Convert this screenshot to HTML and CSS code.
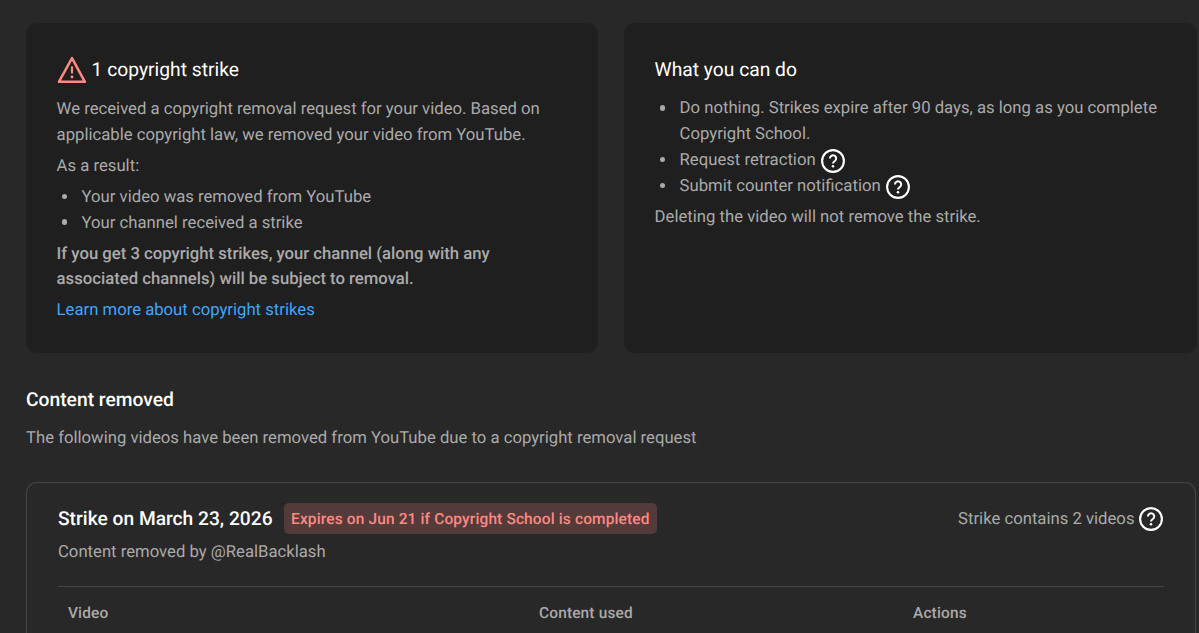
FILE: index.html
```html
<!DOCTYPE html>
<html lang="en">
<head>
<meta charset="utf-8">
<title>Copyright strikes</title>
<link rel="stylesheet" href="styles.css">
</head>
<body>
<svg class="defs" width="0" height="0" aria-hidden="true">
  <symbol id="help" viewBox="0 0 24 24">
    <circle cx="12" cy="12" r="10.9" fill="none" stroke="#fff" stroke-width="2.1"/>
    <path d="M8.9 9.5a3.15 3.15 0 1 1 5 2.5c-1.1.8-1.9 1.2-1.9 2.5" fill="none" stroke="#fff" stroke-width="2"/>
    <circle cx="12" cy="17.2" r="1.3" fill="#fff"/>
  </symbol>
</svg>
<main class="page">
  <div class="cards">
    <section class="card">
      <h2 class="card-title">
        <svg class="warning" viewBox="0 0 30 30"><path d="M15 3.1 27.9 26.8H1.9Z" fill="none" stroke="#ff8983" stroke-width="2.5" stroke-linejoin="round"/><path d="M15 11.4v7" stroke="#ff8983" stroke-width="2.2"/><circle cx="15" cy="22" r="1.4" fill="#ff8983"/></svg>
        <span>1 copyright strike</span>
      </h2>
      <p>We received a copyright removal request for your video. Based on<br>applicable copyright law, we removed your video from YouTube.</p>
      <p>As a result:</p>
      <ul>
        <li>Your video was removed from YouTube</li>
        <li>Your channel received a strike</li>
      </ul>
      <p class="strong">If you get 3 copyright strikes, your channel (along with any<br>associated channels) will be subject to removal.</p>
      <p><a class="link">Learn more about copyright strikes</a></p>
    </section>
    <section class="card options">
      <h2 class="card-title"><span>What you can do</span></h2>
      <ul>
        <li>Do nothing. Strikes expire after 90 days, as long as you complete<br>Copyright School.</li>
        <li>Request retraction<svg class="help"><use href="#help"/></svg></li>
        <li>Submit counter notification<svg class="help"><use href="#help"/></svg></li>
      </ul>
      <p>Deleting the video will not remove the strike.</p>
    </section>
  </div>
  <h2 class="section-title">Content removed</h2>
  <p class="section-sub">The following videos have been removed from YouTube due to a copyright removal request</p>
  <section class="strike">
    <div class="strike-head">
      <h3 class="strike-title">Strike on March 23, 2026</h3>
      <span class="badge">Expires on Jun 21 if Copyright School is completed</span>
      <span class="count">Strike contains 2 videos</span>
      <svg class="help"><use href="#help"/></svg>
    </div>
    <p class="strike-by">Content removed by @RealBacklash</p>
    <div class="columns">
      <span>Video</span><span>Content used</span><span>Actions</span>
    </div>
  </section>
</main>
</body>
</html>
```
FILE: styles.css
```css
* { box-sizing: border-box; }
html, body { height: 100%; }
body {
  margin: 0;
  overflow: hidden;
  background: #282828;
  color: #aaa;
  font: 400 16.69px/25.8px Roboto, sans-serif;
  text-rendering: geometricPrecision;
}
h2, h3, p, ul { margin: 0; padding: 0; font-weight: 400; }
.defs { display: block; height: 0; }
.page {
  display: flex;
  flex-direction: column;
  height: 100%;
  padding: 23px 3px 0 26px;
}
.cards { display: grid; grid-template-columns: 572px 573px; gap: 26px; }
.card {
  height: 330px;
  padding: 31px 31px 31px 30.6px;
  border-radius: 11px;
  background: #1f1f1f;
  white-space: nowrap;
}
.card-title {
  display: flex;
  align-items: center;
  height: 31px;
  margin-bottom: 12.1px;
  color: #fff;
  font-size: 19.25px;
}
.warning { width: 30px; height: 30px; margin-right: 5px; }
.card p, .card ul { margin-bottom: 5.2px; }
.card ul { padding-left: 25px; list-style: none; }
.card li::before {
  content: "";
  display: inline-block;
  width: 5.6px;
  height: 5.6px;
  margin: 0 14.2px 0 -19.8px;
  border-radius: 50%;
  background: currentColor;
  vertical-align: 2.6px;
}
.options .card-title { margin-bottom: 11.3px; }
.help { width: 24px; height: 24px; flex: none; overflow: visible; }
li .help { margin: -8px 0 -8px 5px; vertical-align: 0; }
.strong { font-weight: 500; }
.link { color: #3ea6ff; }
.section-title {
  margin-top: 34px;
  color: #fff;
  font-size: 19.25px;
  font-weight: 500;
  line-height: 26px;
}
.section-sub { margin-top: 13px; }
.strike {
  flex: 1;
  margin-top: 30px;
  padding: 20px 31px 0;
  border: 1px solid #444;
  border-bottom: 0;
  border-radius: 11px 11px 0 0;
  white-space: nowrap;
}
.strike-head { display: flex; align-items: center; height: 31px; }
.strike-title { padding-top: 1px; color: #fff; font-size: 19.2px; font-weight: 500; }
.badge {
  margin-left: 11px;
  padding: 1px 7.5px 0;
  border-radius: 5px;
  background: #533b3a;
  color: #ff8983;
  font-size: 15.45px;
  font-weight: 500;
  letter-spacing: 0.155px;
  line-height: 30px;
}
.count { margin-left: auto; margin-right: 4.5px; padding-top: 3px; }
.strike-head .help { margin: 1px 1px 0 0; }
.strike-by { margin-top: 6px; }
.columns {
  display: grid;
  grid-template-columns: 471px 374px 1fr;
  margin-top: 20px;
  padding: 14.2px 10px 0;
  border-top: 1px solid #444;
  font-size: 15.45px;
  font-weight: 500;
  letter-spacing: 0.155px;
}
```
